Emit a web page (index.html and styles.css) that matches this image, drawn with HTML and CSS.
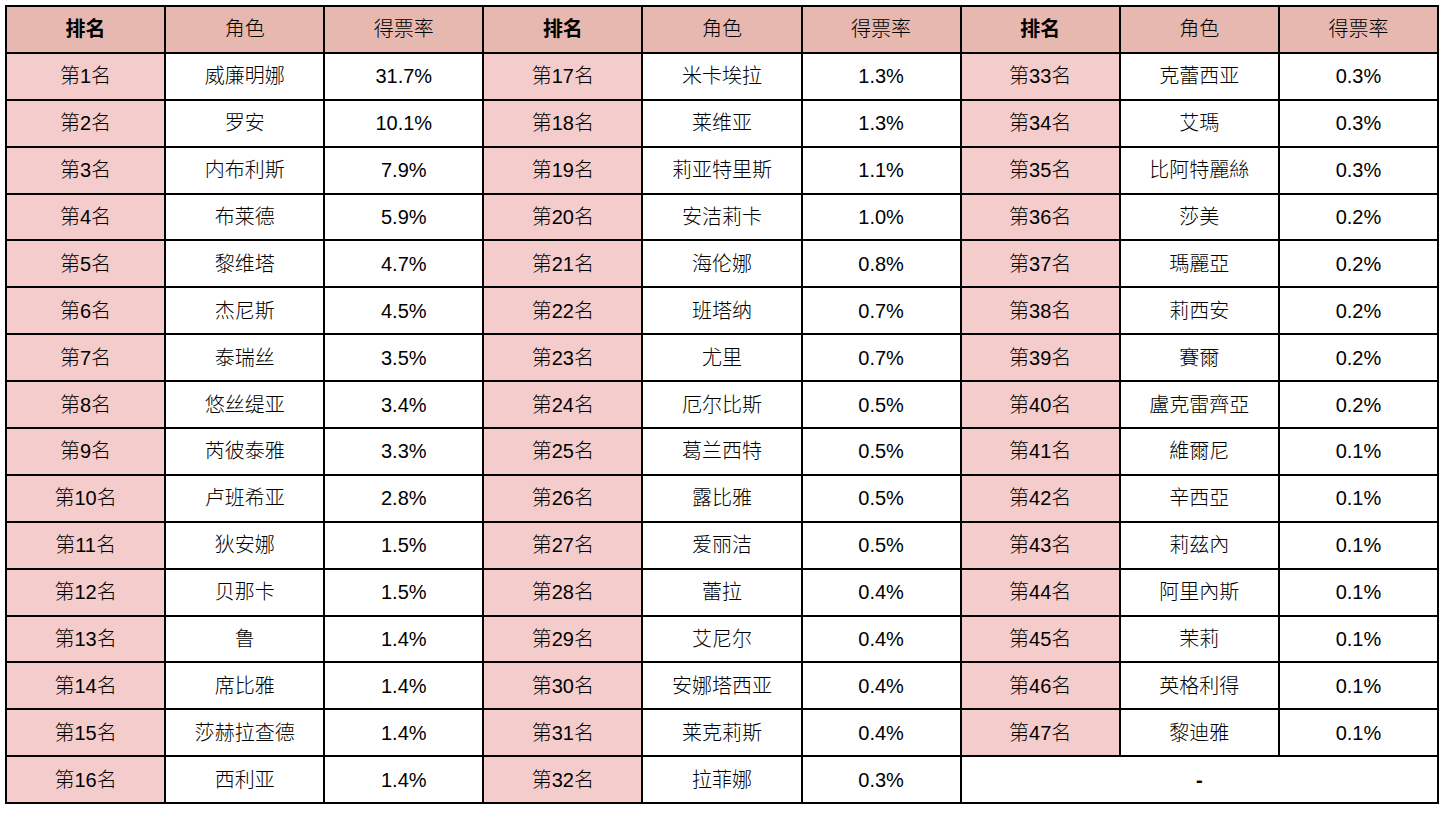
FILE: index.html
```html
<!DOCTYPE html>
<html lang="zh">
<head>
<meta charset="utf-8">
<title>得票率排名</title>
<link rel="stylesheet" href="styles.css">
</head>
<body>
<table class="rank-table">
<thead>
<tr>
<th class="bold">排名</th><th>角色</th><th>得票率</th>
<th class="bold">排名</th><th>角色</th><th>得票率</th>
<th class="bold">排名</th><th>角色</th><th>得票率</th>
</tr>
</thead>
<tbody>
<tr><td class="rank">第1名</td><td>威廉明娜</td><td>31.7%</td><td class="rank">第17名</td><td>米卡埃拉</td><td>1.3%</td><td class="rank">第33名</td><td>克蕾西亚</td><td>0.3%</td></tr>
<tr><td class="rank">第2名</td><td>罗安</td><td>10.1%</td><td class="rank">第18名</td><td>莱维亚</td><td>1.3%</td><td class="rank">第34名</td><td>艾瑪</td><td>0.3%</td></tr>
<tr><td class="rank">第3名</td><td>内布利斯</td><td>7.9%</td><td class="rank">第19名</td><td>莉亚特里斯</td><td>1.1%</td><td class="rank">第35名</td><td>比阿特麗絲</td><td>0.3%</td></tr>
<tr><td class="rank">第4名</td><td>布莱德</td><td>5.9%</td><td class="rank">第20名</td><td>安洁莉卡</td><td>1.0%</td><td class="rank">第36名</td><td>莎美</td><td>0.2%</td></tr>
<tr><td class="rank">第5名</td><td>黎维塔</td><td>4.7%</td><td class="rank">第21名</td><td>海伦娜</td><td>0.8%</td><td class="rank">第37名</td><td>瑪麗亞</td><td>0.2%</td></tr>
<tr><td class="rank">第6名</td><td>杰尼斯</td><td>4.5%</td><td class="rank">第22名</td><td>班塔纳</td><td>0.7%</td><td class="rank">第38名</td><td>莉西安</td><td>0.2%</td></tr>
<tr><td class="rank">第7名</td><td>泰瑞丝</td><td>3.5%</td><td class="rank">第23名</td><td>尤里</td><td>0.7%</td><td class="rank">第39名</td><td>賽爾</td><td>0.2%</td></tr>
<tr><td class="rank">第8名</td><td>悠丝缇亚</td><td>3.4%</td><td class="rank">第24名</td><td>厄尔比斯</td><td>0.5%</td><td class="rank">第40名</td><td>盧克雷齊亞</td><td>0.2%</td></tr>
<tr><td class="rank">第9名</td><td>芮彼泰雅</td><td>3.3%</td><td class="rank">第25名</td><td>葛兰西特</td><td>0.5%</td><td class="rank">第41名</td><td>維爾尼</td><td>0.1%</td></tr>
<tr><td class="rank">第10名</td><td>卢班希亚</td><td>2.8%</td><td class="rank">第26名</td><td>露比雅</td><td>0.5%</td><td class="rank">第42名</td><td>辛西亞</td><td>0.1%</td></tr>
<tr><td class="rank">第11名</td><td>狄安娜</td><td>1.5%</td><td class="rank">第27名</td><td>爱丽洁</td><td>0.5%</td><td class="rank">第43名</td><td>莉茲內</td><td>0.1%</td></tr>
<tr><td class="rank">第12名</td><td>贝那卡</td><td>1.5%</td><td class="rank">第28名</td><td>蕾拉</td><td>0.4%</td><td class="rank">第44名</td><td>阿里內斯</td><td>0.1%</td></tr>
<tr><td class="rank">第13名</td><td>鲁</td><td>1.4%</td><td class="rank">第29名</td><td>艾尼尔</td><td>0.4%</td><td class="rank">第45名</td><td>茉莉</td><td>0.1%</td></tr>
<tr><td class="rank">第14名</td><td>席比雅</td><td>1.4%</td><td class="rank">第30名</td><td>安娜塔西亚</td><td>0.4%</td><td class="rank">第46名</td><td>英格利得</td><td>0.1%</td></tr>
<tr><td class="rank">第15名</td><td>莎赫拉查德</td><td>1.4%</td><td class="rank">第31名</td><td>莱克莉斯</td><td>0.4%</td><td class="rank">第47名</td><td>黎迪雅</td><td>0.1%</td></tr>
<tr><td class="rank">第16名</td><td>西利亚</td><td>1.4%</td><td class="rank">第32名</td><td>拉菲娜</td><td>0.3%</td><td class="dash" colspan="3">-</td></tr>
</tbody>
</table>
</body>
</html>
```

FILE: styles.css
```css
html, body {
  background: #ffffff;
}
body {
  margin: 5px;
  font-family: "Liberation Sans", "Noto Sans CJK SC", sans-serif;
  color: #000000;
}
.rank-table {
  width: 1434px;
  table-layout: fixed;
  border-collapse: separate;
  border-spacing: 0;
  border-top: 2px solid #000;
  border-left: 2px solid #000;
}
.rank-table th,
.rank-table td {
  height: 44.9px;
  padding: 0;
  border-right: 2px solid #000;
  border-bottom: 2px solid #000;
  text-align: center;
  vertical-align: middle;
  font-size: 20px;
  font-weight: 300;
  line-height: 1;
  background: #ffffff;
}
.rank-table th {
  background: #e6b8af;
}
.rank-table th.bold {
  font-weight: bold;
}
.rank-table td.rank {
  background: #f4cccc;
}
.rank-table td.dash {
  font-weight: bold;
}
```
